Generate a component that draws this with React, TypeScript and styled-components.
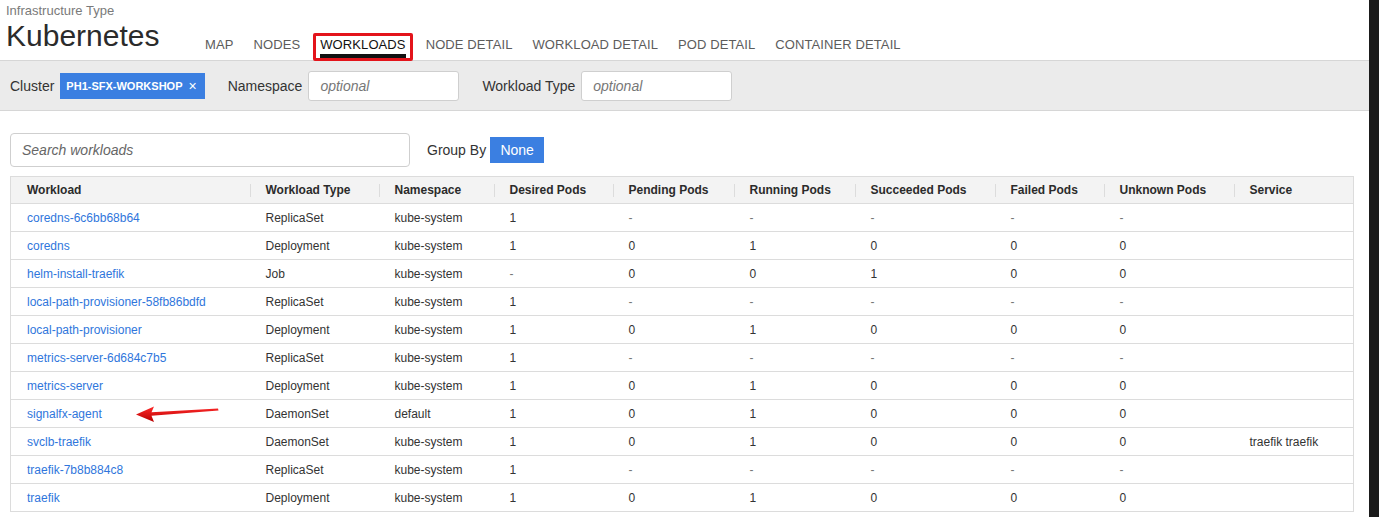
import React from "react"
import styled, { createGlobalStyle } from "styled-components"

const GlobalStyle = createGlobalStyle`
  html, body {
    margin: 0;
    padding: 0;
    background: #fff;
  }
  body {
    font-family: "Liberation Sans", Arial, sans-serif;
    color: #333;
  }
  * {
    box-sizing: border-box;
  }
`

const Page = styled.div`
  display: flex;
  height: 517px;
  overflow: hidden;
`

const Main = styled.div`
  flex: 1;
  min-width: 0;
`

const Edge = styled.div`
  width: 10px;
  background: #1b1b1b;
`

const Header = styled.header`
  display: flex;
  align-items: flex-end;
  height: 60px;
`

const TitleBlock = styled.div`
  width: 205px;
  padding-left: 6px;
  align-self: stretch;
`

const Eyebrow = styled.div`
  font-size: 13px;
  color: #7a7a7a;
  line-height: 16px;
  padding-top: 3px;
`

const Title = styled.h1`
  margin: 0;
  font-size: 30px;
  font-weight: 400;
  line-height: 34px;
  color: #2b2b2b;
`

const Nav = styled.nav`
  display: flex;
  gap: 20px;
  height: 60px;
  align-items: flex-end;
`

const Tab = styled.div<{ active?: boolean }>`
  position: relative;
  font-size: 13px;
  letter-spacing: 0.1px;
  text-transform: uppercase;
  color: ${({ active }) => (active ? "#111" : "#5c5c5c")};
  padding-bottom: 2px;
  line-height: 14px;
  border-bottom: 4px solid ${({ active }) => (active ? "#111" : "transparent")};
  margin-bottom: 2px;
`

const Highlight = styled.span`
  position: absolute;
  left: -7px;
  right: -7px;
  top: -5px;
  bottom: -7px;
  border: 3px solid #e3141b;
  border-radius: 2px;
  z-index: 2;
  pointer-events: none;
`

const FilterBar = styled.div`
  display: flex;
  align-items: center;
  height: 51px;
  padding: 0 10px;
  background: #ebebeb;
  border-top: 1px solid #d6d6d6;
  border-bottom: 1px solid #d6d6d6;
`

const FilterLabel = styled.span<{ spaced?: boolean }>`
  font-size: 14px;
  color: #333;
  margin-left: ${({ spaced }) => (spaced ? "23px" : "0")};
  margin-right: 6px;
`

const Chip = styled.span`
  display: inline-flex;
  align-items: center;
  gap: 6px;
  height: 26px;
  padding: 0 8px 0 6px;
  background: #3b7fe1;
  color: #fff;
  font-size: 11px;
  font-weight: 700;
  margin-top: 1px;
`

const ChipClose = styled.span`
  font-weight: 400;
  font-size: 14px;
`

const FilterInput = styled.input`
  width: 151px;
  height: 30px;
  border: 1px solid #cfcfcf;
  border-radius: 3px;
  background: #fff;
  padding: 0 11px;
  font-family: inherit;
  font-size: 14px;
  outline: none;
  margin-top: 1px;

  &::placeholder {
    color: #777;
    font-style: italic;
  }
`

const Content = styled.div`
  padding: 22px 16px 0 10px;
`

const SearchRow = styled.div`
  display: flex;
  align-items: center;
  gap: 17px;
  margin-bottom: 9px;
`

const SearchInput = styled.input`
  width: 400px;
  height: 34px;
  border: 1px solid #cfcfcf;
  border-radius: 4px;
  padding: 0 11px;
  font-family: inherit;
  font-size: 14px;
  outline: none;

  &::placeholder {
    color: #666;
    font-style: italic;
  }
`

const GroupBy = styled.div`
  display: flex;
  align-items: center;
  gap: 4px;
  font-size: 14px;
  color: #333;
`

const GroupButton = styled.button`
  height: 26px;
  width: 54px;
  border: none;
  background: #3b7fe1;
  color: #fff;
  font-family: inherit;
  font-size: 14px;
  padding: 0;
`

const TableWrap = styled.div`
  position: relative;
`

const Table = styled.table`
  width: 1343px;
  border-collapse: collapse;
  table-layout: fixed;
  border: 1px solid #dcdcdc;
  font-size: 12px;
`

const Th = styled.th<{ first?: boolean }>`
  position: relative;
  height: 27px;
  text-align: left;
  font-weight: 700;
  color: #2b2b2b;
  background: #f3f3f3;
  padding: 0 0 0 16px;
  border-bottom: 1px solid #dcdcdc;
  white-space: nowrap;

  &::before {
    content: "";
    display: ${({ first }) => (first ? "none" : "block")};
    position: absolute;
    left: 0;
    top: 7px;
    bottom: 6px;
    width: 1px;
    background: #dcdcdc;
  }
`

const Td = styled.td<{ muted?: boolean }>`
  height: 28px;
  padding: 0 0 0 16px;
  border-bottom: 1px solid #dcdcdc;
  color: ${({ muted }) => (muted ? "#777" : "#333")};
  white-space: nowrap;
`

const Link = styled.a`
  color: #2f76dc;
  text-decoration: none;
`

const Arrow = styled.svg`
  position: absolute;
  left: 122px;
  top: 228px;
  width: 92px;
  height: 20px;
  pointer-events: none;
`

const columns = [
  { label: "Workload", width: 239 },
  { label: "Workload Type", width: 129 },
  { label: "Namespace", width: 115 },
  { label: "Desired Pods", width: 119 },
  { label: "Pending Pods", width: 121 },
  { label: "Running Pods", width: 121 },
  { label: "Succeeded Pods", width: 140 },
  { label: "Failed Pods", width: 109 },
  { label: "Unknown Pods", width: 130 },
  { label: "Service", width: 120 },
]

const rows: string[][] = [
  ["coredns-6c6bb68b64", "ReplicaSet", "kube-system", "1", "-", "-", "-", "-", "-", ""],
  ["coredns", "Deployment", "kube-system", "1", "0", "1", "0", "0", "0", ""],
  ["helm-install-traefik", "Job", "kube-system", "-", "0", "0", "1", "0", "0", ""],
  ["local-path-provisioner-58fb86bdfd", "ReplicaSet", "kube-system", "1", "-", "-", "-", "-", "-", ""],
  ["local-path-provisioner", "Deployment", "kube-system", "1", "0", "1", "0", "0", "0", ""],
  ["metrics-server-6d684c7b5", "ReplicaSet", "kube-system", "1", "-", "-", "-", "-", "-", ""],
  ["metrics-server", "Deployment", "kube-system", "1", "0", "1", "0", "0", "0", ""],
  ["signalfx-agent", "DaemonSet", "default", "1", "0", "1", "0", "0", "0", ""],
  ["svclb-traefik", "DaemonSet", "kube-system", "1", "0", "1", "0", "0", "0", "traefik traefik"],
  ["traefik-7b8b884c8", "ReplicaSet", "kube-system", "1", "-", "-", "-", "-", "-", ""],
  ["traefik", "Deployment", "kube-system", "1", "0", "1", "0", "0", "0", ""],
]

const tabs = ["Map", "Nodes", "Workloads", "Node Detail", "Workload Detail", "Pod Detail", "Container Detail"]

export default function App() {
  return (
    <>
      <GlobalStyle />
      <Page>
        <Main>
          <Header>
            <TitleBlock>
              <Eyebrow>Infrastructure Type</Eyebrow>
              <Title>Kubernetes</Title>
            </TitleBlock>
            <Nav>
              {tabs.map((t) => (
                <Tab key={t} active={t === "Workloads"}>
                  {t}
                  {t === "Workloads" && <Highlight />}
                </Tab>
              ))}
            </Nav>
          </Header>

          <FilterBar>
            <FilterLabel>Cluster</FilterLabel>
            <Chip>
              PH1-SFX-WORKSHOP <ChipClose>×</ChipClose>
            </Chip>
            <FilterLabel spaced>Namespace</FilterLabel>
            <FilterInput placeholder="optional" />
            <FilterLabel spaced>Workload Type</FilterLabel>
            <FilterInput placeholder="optional" />
          </FilterBar>

          <Content>
            <SearchRow>
              <SearchInput placeholder="Search workloads" />
              <GroupBy>
                Group By <GroupButton>None</GroupButton>
              </GroupBy>
            </SearchRow>

            <TableWrap>
              <Table>
                <colgroup>
                  {columns.map((c) => (
                    <col key={c.label} style={{ width: c.width }} />
                  ))}
                </colgroup>
                <thead>
                  <tr>
                    {columns.map((c, i) => (
                      <Th key={c.label} first={i === 0}>
                        {c.label}
                      </Th>
                    ))}
                  </tr>
                </thead>
                <tbody>
                  {rows.map((r) => (
                    <tr key={r[0]}>
                      {r.map((cell, i) => (
                        <Td key={i} muted={cell === "-"}>
                          {i === 0 ? <Link href="#">{cell}</Link> : cell}
                        </Td>
                      ))}
                    </tr>
                  ))}
                </tbody>
              </Table>

              <Arrow viewBox="0 0 92 20">
                <defs>
                  <linearGradient id="arrowFill" x1="0" y1="0" x2="0" y2="1">
                    <stop offset="0" stopColor="#ff2a2a" />
                    <stop offset="1" stopColor="#b80000" />
                  </linearGradient>
                </defs>
                <path
                  d="M4 10.5 L22 2.5 L19.5 8.2 L86 4.6 L86.5 6.6 L19.5 11.8 L22 18 Z"
                  fill="url(#arrowFill)"
                />
              </Arrow>
            </TableWrap>
          </Content>
        </Main>
        <Edge />
      </Page>
    </>
  )
}
